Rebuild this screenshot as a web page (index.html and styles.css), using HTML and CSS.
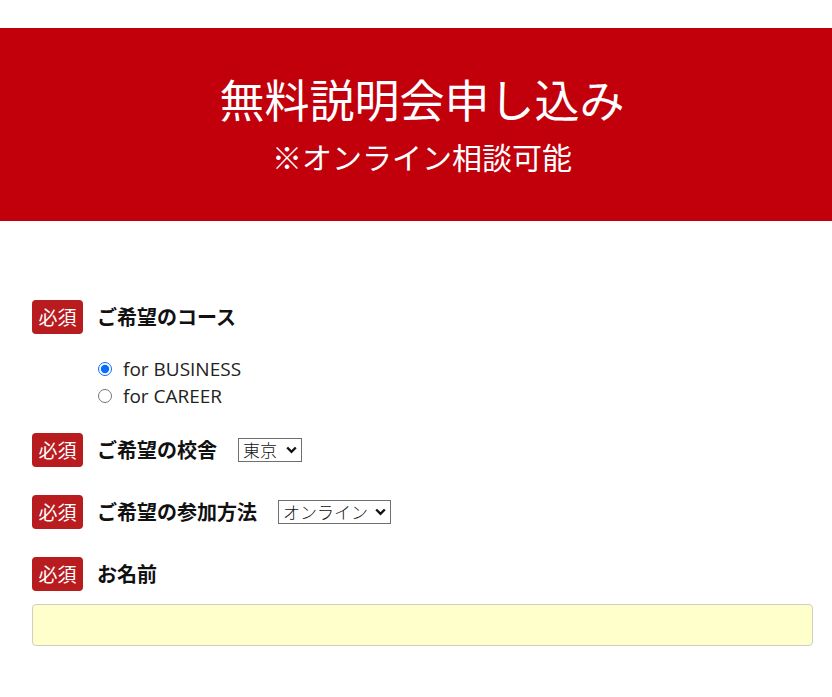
FILE: index.html
```html
<!DOCTYPE html>
<html lang="ja">
<head>
<meta charset="utf-8">
<title>無料説明会申し込み</title>
<link rel="stylesheet" href="styles.css">
</head>
<body>
<header class="hero">
  <h1 class="hero-title">無料説明会申し込み</h1>
  <p class="hero-sub">※オンライン相談可能</p>
</header>
<form class="form">
  <div class="field field-course">
    <div class="field-head">
      <span class="badge">必須</span>
      <span class="label">ご希望のコース</span>
    </div>
    <div class="radios">
      <label class="radio-row"><input type="radio" name="course" checked><span>for BUSINESS</span></label>
      <label class="radio-row"><input type="radio" name="course"><span>for CAREER</span></label>
    </div>
  </div>
  <div class="field field-school">
    <div class="field-head">
      <span class="badge">必須</span>
      <span class="label">ご希望の校舎</span>
      <div class="select select-school"><span>東京</span><svg class="chev" viewBox="0 0 11 8" width="11" height="8"><path d="M1.2 1.5 L5.5 5.8 L9.8 1.5" fill="none" stroke="#111" stroke-width="2.4"/></svg></div>
    </div>
  </div>
  <div class="field field-method">
    <div class="field-head">
      <span class="badge">必須</span>
      <span class="label">ご希望の参加方法</span>
      <div class="select select-method"><span>オンライン</span><svg class="chev" viewBox="0 0 11 8" width="11" height="8"><path d="M1.2 1.5 L5.5 5.8 L9.8 1.5" fill="none" stroke="#111" stroke-width="2.4"/></svg></div>
    </div>
  </div>
  <div class="field field-name">
    <div class="field-head">
      <span class="badge">必須</span>
      <span class="label">お名前</span>
    </div>
    <input class="text-input" type="text">
  </div>
</form>
</body>
</html>
```

FILE: styles.css
```css
html, body {
  margin: 0;
  padding: 0;
  background: #ffffff;
}
body {
  font-family: "Noto Sans CJK JP", "Noto Sans", sans-serif;
  color: #111;
}
.hero {
  margin-top: 28px;
  height: 193px;
  box-sizing: border-box;
  background: #c1000c;
  color: #fff;
  text-align: center;
  padding: 44px 0 0 12px;
}
.hero-title {
  margin: 0;
  font-size: 45px;
  font-weight: 400;
  line-height: 54px;
}
.hero-sub {
  margin: 12px 0 0;
  font-size: 30px;
  font-weight: 400;
  line-height: 36px;
}
.form {
  padding: 79px 19px 0 32px;
}
.field-head {
  display: flex;
  align-items: center;
  height: 34px;
}
.badge {
  width: 51px;
  height: 34px;
  border-radius: 4px;
  background: #b81c1f;
  color: #fff;
  font-size: 19px;
  font-weight: 400;
  line-height: 34px;
  text-align: center;
  flex: none;
}
.label {
  margin-left: 14px;
  font-size: 20px;
  font-weight: 700;
  line-height: 34px;
}
.radios {
  padding: 21px 0 0 66px;
  display: flex;
  flex-direction: column;
}
.radio-row {
  display: flex;
  align-items: center;
  height: 27px;
  font-family: "Open Sans", "Noto Sans", sans-serif;
  font-size: 19px;
  color: #222;
}
.radio-row input {
  width: 14px;
  height: 14px;
  margin: 0 11px 0 0;
  accent-color: #0a6cff;
}
.field-school {
  margin-top: 24px;
}
.field-method,
.field-name {
  margin-top: 28px;
}
.select {
  margin-left: 21px;
  height: 24px;
  box-sizing: border-box;
  border: 1px solid #6f6f6f;
  display: flex;
  align-items: center;
  padding: 0 4px 0 4px;
  font-size: 17px;
  font-weight: 300;
  color: #111;
  background: #fff;
}
.select span {
  line-height: 22px;
}
.select-school { width: 64px; }
.select-method { width: 113px; }
.chev {
  margin-left: auto;
  flex: none;
}
.text-input {
  display: block;
  margin-top: 13px;
  width: 100%;
  height: 42px;
  box-sizing: border-box;
  border: 1px solid #cfcfc6;
  border-radius: 4px;
  background: #ffffcc;
  outline: none;
}
```
